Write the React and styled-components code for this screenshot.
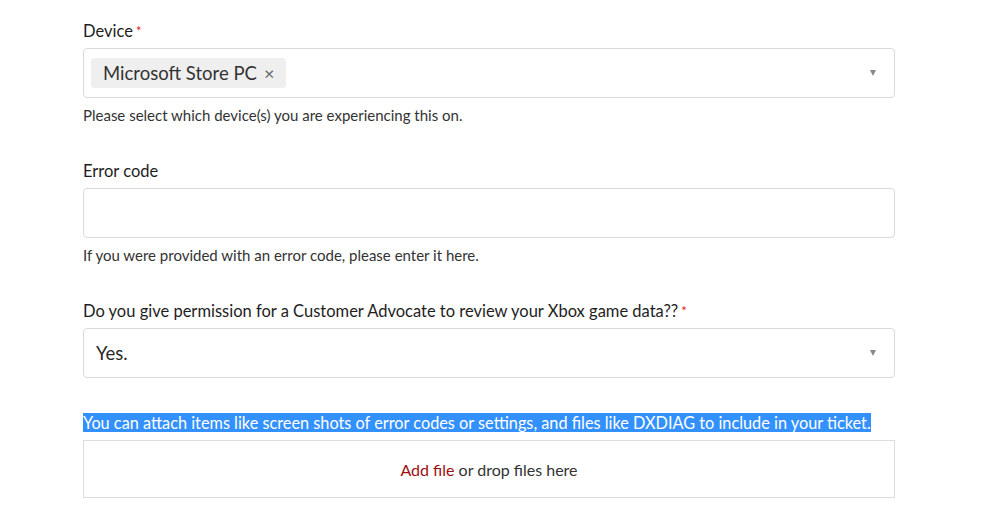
import styled, { createGlobalStyle } from "styled-components";

const GlobalStyle = createGlobalStyle`
  body {
    margin: 0;
    background: #fff;
    font-family: "Lato", "Open Sans", sans-serif;
    color: #222;
  }
`;

export default function App() {
  return (
    <>
      <GlobalStyle />
      <Form>
        <Field>
          <Label>
            Device<Required>*</Required>
          </Label>
          <SelectBox>
            <Tag>
              Microsoft Store PC <TagClose>×</TagClose>
            </Tag>
            <Caret />
          </SelectBox>
          <Help>Please select which device(s) you are experiencing this on.</Help>
        </Field>

        <Field>
          <Label>Error code</Label>
          <TextInput type="text" />
          <Help>If you were provided with an error code, please enter it here.</Help>
        </Field>

        <Field>
          <Label>
            Do you give permission for a Customer Advocate to review your Xbox game data??
            <Required>*</Required>
          </Label>
          <SelectBox>
            <SelectValue>Yes.</SelectValue>
            <Caret />
          </SelectBox>
        </Field>

        <Attach>
          <Selected>
            You can attach items like screen shots of error codes or settings, and files like DXDIAG to include in your ticket.
          </Selected>
          <DropZone>
            <AddLink>Add file</AddLink>&nbsp;or drop files here
          </DropZone>
        </Attach>
      </Form>
    </>
  );
}

const Form = styled.div`
  width: 812px;
  margin-left: 83px;
  padding-top: 21px;
  display: flex;
  flex-direction: column;
`;

const Field = styled.div`
  display: flex;
  flex-direction: column;
  margin-bottom: 35px;
`;

const Label = styled.label`
  font-size: 16.5px;
  line-height: 20px;
  margin-bottom: 7px;
  color: #1e1e1e;
`;

const Required = styled.span`
  color: #e0202a;
  font-size: 13px;
  margin-left: 3px;
  vertical-align: 1px;
`;

const SelectBox = styled.div`
  position: relative;
  height: 50px;
  box-sizing: border-box;
  border: 1px solid #dadada;
  border-radius: 4px;
  display: flex;
  align-items: center;
  padding: 0 7px;
`;

const Tag = styled.span`
  display: inline-flex;
  align-items: center;
  height: 30px;
  padding: 0 12px;
  background: #efefef;
  border-radius: 4px;
  font-size: 18.5px;
  color: #333;
`;

const TagClose = styled.span`
  font-size: 18px;
  color: #666;
  margin-left: 7px;
`;

const SelectValue = styled.span`
  font-size: 18.5px;
  color: #2a2a2a;
  padding-left: 5px;
`;

const Caret = styled.span`
  position: absolute;
  right: 18px;
  top: 21px;
  width: 0;
  height: 0;
  border-left: 3.5px solid transparent;
  border-right: 3.5px solid transparent;
  border-top: 6px solid #888;
`;

const TextInput = styled.input`
  height: 50px;
  box-sizing: border-box;
  border: 1px solid #dadada;
  border-radius: 4px;
  font: inherit;
  padding: 0 12px;
  outline: none;
`;

const Help = styled.div`
  margin-top: 8px;
  margin-bottom: 1px;
  font-size: 15px;
  line-height: 19px;
  color: #333;
`;

const Attach = styled.div`
  display: flex;
  flex-direction: column;
`;

const Selected = styled.div`
  align-self: flex-start;
  font-size: 16.3px;
  line-height: 19px;
  background: #3390ff;
  color: #fff;
  margin-bottom: 8px;
`;

const DropZone = styled.div`
  height: 58px;
  box-sizing: border-box;
  border: 1px solid #ddd;
  display: flex;
  align-items: center;
  justify-content: center;
  font-size: 16px;
  color: #333;
`;

const AddLink = styled.span`
  color: #9b1010;
  cursor: pointer;
`;
